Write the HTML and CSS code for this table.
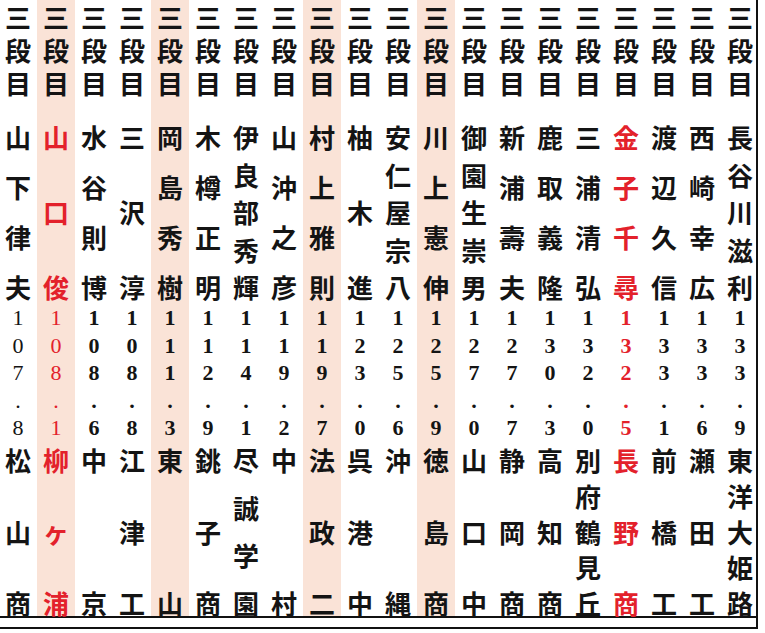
FILE: index.html
```html
<!DOCTYPE html>
<html lang="ja">
<head>
<meta charset="utf-8">
<title>三段目</title>
<link rel="stylesheet" href="styles.css">
</head>
<body>
<div class="frame">
  <div class="grid">
    <div class="col light">
      <div class="hd"><span>三</span><span>段</span><span>目</span></div>
      <div class="nm"><span>山</span><span>下</span><span>律</span><span>夫</span></div>
      <div class="num"><span>1</span><span>0</span><span>7</span><span>.</span><span>8</span></div>
      <div class="sc"><span>松</span><span>山</span><span>商</span></div>
    </div>
    <div class="col band red light">
      <div class="hd"><span>三</span><span>段</span><span>目</span></div>
      <div class="nm"><span>山</span><span>口</span><span>俊</span></div>
      <div class="num"><span>1</span><span>0</span><span>8</span><span>.</span><span>1</span></div>
      <div class="sc"><span>柳</span><span>ヶ</span><span>浦</span></div>
    </div>
    <div class="col">
      <div class="hd"><span>三</span><span>段</span><span>目</span></div>
      <div class="nm"><span>水</span><span>谷</span><span>則</span><span>博</span></div>
      <div class="num"><span>1</span><span>0</span><span>8</span><span>.</span><span>6</span></div>
      <div class="sc"><span>中</span><span>京</span></div>
    </div>
    <div class="col">
      <div class="hd"><span>三</span><span>段</span><span>目</span></div>
      <div class="nm"><span>三</span><span>沢</span><span>淳</span></div>
      <div class="num"><span>1</span><span>0</span><span>8</span><span>.</span><span>8</span></div>
      <div class="sc"><span>江</span><span>津</span><span>工</span></div>
    </div>
    <div class="col band">
      <div class="hd"><span>三</span><span>段</span><span>目</span></div>
      <div class="nm"><span>岡</span><span>島</span><span>秀</span><span>樹</span></div>
      <div class="num"><span>1</span><span>1</span><span>1</span><span>.</span><span>3</span></div>
      <div class="sc"><span>東</span><span>山</span></div>
    </div>
    <div class="col">
      <div class="hd"><span>三</span><span>段</span><span>目</span></div>
      <div class="nm"><span>木</span><span>樽</span><span>正</span><span>明</span></div>
      <div class="num"><span>1</span><span>1</span><span>2</span><span>.</span><span>9</span></div>
      <div class="sc"><span>銚</span><span>子</span><span>商</span></div>
    </div>
    <div class="col">
      <div class="hd"><span>三</span><span>段</span><span>目</span></div>
      <div class="nm"><span>伊</span><span>良</span><span>部</span><span>秀</span><span>輝</span></div>
      <div class="num"><span>1</span><span>1</span><span>4</span><span>.</span><span>1</span></div>
      <div class="sc"><span>尽</span><span>誠</span><span>学</span><span>園</span></div>
    </div>
    <div class="col">
      <div class="hd"><span>三</span><span>段</span><span>目</span></div>
      <div class="nm"><span>山</span><span>沖</span><span>之</span><span>彦</span></div>
      <div class="num"><span>1</span><span>1</span><span>9</span><span>.</span><span>2</span></div>
      <div class="sc"><span>中</span><span>村</span></div>
    </div>
    <div class="col band">
      <div class="hd"><span>三</span><span>段</span><span>目</span></div>
      <div class="nm"><span>村</span><span>上</span><span>雅</span><span>則</span></div>
      <div class="num"><span>1</span><span>1</span><span>9</span><span>.</span><span>7</span></div>
      <div class="sc"><span>法</span><span>政</span><span>二</span></div>
    </div>
    <div class="col">
      <div class="hd"><span>三</span><span>段</span><span>目</span></div>
      <div class="nm"><span>柚</span><span>木</span><span>進</span></div>
      <div class="num"><span>1</span><span>2</span><span>3</span><span>.</span><span>0</span></div>
      <div class="sc"><span>呉</span><span>港</span><span>中</span></div>
    </div>
    <div class="col">
      <div class="hd"><span>三</span><span>段</span><span>目</span></div>
      <div class="nm"><span>安</span><span>仁</span><span>屋</span><span>宗</span><span>八</span></div>
      <div class="num"><span>1</span><span>2</span><span>5</span><span>.</span><span>6</span></div>
      <div class="sc"><span>沖</span><span>縄</span></div>
    </div>
    <div class="col band">
      <div class="hd"><span>三</span><span>段</span><span>目</span></div>
      <div class="nm"><span>川</span><span>上</span><span>憲</span><span>伸</span></div>
      <div class="num"><span>1</span><span>2</span><span>5</span><span>.</span><span>9</span></div>
      <div class="sc"><span>徳</span><span>島</span><span>商</span></div>
    </div>
    <div class="col">
      <div class="hd"><span>三</span><span>段</span><span>目</span></div>
      <div class="nm"><span>御</span><span>園</span><span>生</span><span>崇</span><span>男</span></div>
      <div class="num"><span>1</span><span>2</span><span>7</span><span>.</span><span>0</span></div>
      <div class="sc"><span>山</span><span>口</span><span>中</span></div>
    </div>
    <div class="col">
      <div class="hd"><span>三</span><span>段</span><span>目</span></div>
      <div class="nm"><span>新</span><span>浦</span><span>壽</span><span>夫</span></div>
      <div class="num"><span>1</span><span>2</span><span>7</span><span>.</span><span>7</span></div>
      <div class="sc"><span>静</span><span>岡</span><span>商</span></div>
    </div>
    <div class="col">
      <div class="hd"><span>三</span><span>段</span><span>目</span></div>
      <div class="nm"><span>鹿</span><span>取</span><span>義</span><span>隆</span></div>
      <div class="num"><span>1</span><span>3</span><span>0</span><span>.</span><span>3</span></div>
      <div class="sc"><span>高</span><span>知</span><span>商</span></div>
    </div>
    <div class="col">
      <div class="hd"><span>三</span><span>段</span><span>目</span></div>
      <div class="nm"><span>三</span><span>浦</span><span>清</span><span>弘</span></div>
      <div class="num"><span>1</span><span>3</span><span>2</span><span>.</span><span>0</span></div>
      <div class="sc"><span>別</span><span>府</span><span>鶴</span><span>見</span><span>丘</span></div>
    </div>
    <div class="col red">
      <div class="hd"><span>三</span><span>段</span><span>目</span></div>
      <div class="nm"><span>金</span><span>子</span><span>千</span><span>尋</span></div>
      <div class="num"><span>1</span><span>3</span><span>2</span><span>.</span><span>5</span></div>
      <div class="sc"><span>長</span><span>野</span><span>商</span></div>
    </div>
    <div class="col">
      <div class="hd"><span>三</span><span>段</span><span>目</span></div>
      <div class="nm"><span>渡</span><span>辺</span><span>久</span><span>信</span></div>
      <div class="num"><span>1</span><span>3</span><span>3</span><span>.</span><span>1</span></div>
      <div class="sc"><span>前</span><span>橋</span><span>工</span></div>
    </div>
    <div class="col">
      <div class="hd"><span>三</span><span>段</span><span>目</span></div>
      <div class="nm"><span>西</span><span>崎</span><span>幸</span><span>広</span></div>
      <div class="num"><span>1</span><span>3</span><span>3</span><span>.</span><span>6</span></div>
      <div class="sc"><span>瀬</span><span>田</span><span>工</span></div>
    </div>
    <div class="col">
      <div class="hd"><span>三</span><span>段</span><span>目</span></div>
      <div class="nm"><span>長</span><span>谷</span><span>川</span><span>滋</span><span>利</span></div>
      <div class="num"><span>1</span><span>3</span><span>3</span><span>.</span><span>9</span></div>
      <div class="sc"><span>東</span><span>洋</span><span>大</span><span>姫</span><span>路</span></div>
    </div>
  </div>
</div>
</body>
</html>
```

FILE: styles.css
```css
html, body {
  margin: 0;
  padding: 0;
  background: #ffffff;
}

body {
  font-family: "Noto Sans CJK JP", "Noto Sans", sans-serif;
  color: #141414;
}

.frame {
  margin-left: -1px;
  width: 757px;
  border-right: 2px solid #111;
  border-bottom: 2px solid #111;
  padding-bottom: 9px;
}

.grid {
  display: grid;
  grid-template-columns: repeat(20, 38px);
  border-bottom: 2px solid #111;
}

.col {
  display: flex;
  flex-direction: column;
  align-items: center;
  height: 616px;
  padding-top: 4px;
  box-sizing: border-box;
}

.band {
  background: #fae3d7;
}

.red .nm,
.red .num,
.red .sc {
  color: #e3212b;
}

.hd,
.nm,
.num,
.sc {
  display: flex;
  flex-direction: column;
  justify-content: space-between;
  align-items: center;
}

.hd span,
.nm span,
.sc span {
  display: block;
  width: 26px;
  height: 26px;
  line-height: 26px;
  font-size: 26px;
  font-weight: 600;
  text-align: center;
}

.hd {
  height: 92px;
}

.nm {
  margin-top: 28px;
  height: 176px;
}

.num {
  margin-top: 8px;
  height: 130px;
  font-family: "Liberation Serif", serif;
  font-weight: 700;
}

.num span {
  display: block;
  height: 20px;
  line-height: 20px;
  font-size: 22px;
  text-align: center;
}

.light .num {
  font-weight: 400;
}

.sc {
  margin-top: 9px;
  height: 169px;
}
```
